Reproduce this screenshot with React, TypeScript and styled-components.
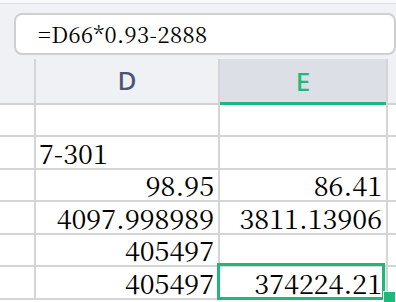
import styled, { createGlobalStyle } from 'styled-components'

const GlobalStyle = createGlobalStyle`
  html, body {
    margin: 0;
    padding: 0;
    background: #ffffff;
    overflow: hidden;
  }
`

const green = '#1fb87b'
const gridLine = '#d5d5d7'
const serifStack = `"Noto Serif CJK SC", "Liberation Serif", serif`

interface Row {
  d: string;
  e: string;
  dAlign?: 'left' | 'right';
  height: number;
  selected?: boolean;
}

const rows: Row[] = [
  { d: '', e: '', height: 32 },
  { d: '7-301', e: '', dAlign: 'left', height: 33 },
  { d: '98.95', e: '86.41', height: 32 },
  { d: '4097.998989', e: '3811.13906', height: 33 },
  { d: '405497', e: '', height: 32 },
  { d: '405497', e: '374224.21', height: 33, selected: true },
]

export const App = () => {
  return (
    <Page>
      <GlobalStyle />
      <Toolbar>
        <FormulaBox>=D66*0.93-2888</FormulaBox>
      </Toolbar>
      <Sheet>
        <HeaderRow>
          <HeadCell $width={36} $edge />
          <HeadCell $width={184} $edge>D</HeadCell>
          <HeadCell $width={168} $edge $active>E</HeadCell>
          <HeadCell />
        </HeaderRow>
        {rows.map((row, i) => (
          <DataRow key={i} $height={row.height}>
            <Cell $width={36} />
            <Cell $width={184} $align={row.dAlign || 'right'}>{row.d}</Cell>
            <Cell $width={168} $align="right">
              {row.e}
              {row.selected && (
                <>
                  <Selection />
                  <FillHandle />
                </>
              )}
            </Cell>
            <Cell $last />
          </DataRow>
        ))}
      </Sheet>
    </Page>
  )
}

const Page = styled.div`
  width: 396px;
  height: 302px;
  overflow: hidden;
  display: flex;
  flex-direction: column;
  background: #ffffff;
`

const Toolbar = styled.div`
  height: 56px;
  flex-shrink: 0;
  box-sizing: border-box;
  background: #f0f1f5;
  border-top: 3px solid #f8f8fa;
  box-shadow: inset 0 1px 0 #dfdfe3;
  padding: 10px 0 0 14px;
  display: flex;
`

const FormulaBox = styled.div`
  box-sizing: border-box;
  width: 420px;
  height: 42px;
  background: #ffffff;
  border: 2px solid #cfcfd3;
  border-radius: 8px;
  padding-left: 22px;
  display: flex;
  align-items: center;
  font-family: ${serifStack};
  font-size: 22px;
  line-height: 1;
  letter-spacing: 0.4px;
  color: #000000;
`

const Sheet = styled.div`
  display: flex;
  flex-direction: column;
`

const HeaderRow = styled.div`
  display: flex;
  height: 49px;
  box-sizing: border-box;
  background: #f0f1f5;
  border-bottom: 2px solid #d2d2d6;
`

const HeadCell = styled.div<{ $width?: number; $edge?: boolean; $active?: boolean }>`
  position: relative;
  box-sizing: border-box;
  ${p => (p.$width ? `width: ${p.$width}px; flex-shrink: 0;` : 'flex: 1;')}
  margin-top: 3px;
  border-right: ${p => (p.$edge ? `2px solid ${gridLine}` : 'none')};
  background: ${p => (p.$active ? '#dcdfe6' : 'transparent')};
  box-shadow: ${p => (p.$active ? `inset 0 -3px 0 ${green}` : 'none')};
  margin-bottom: ${p => (p.$active ? '-2px' : '0')};
  display: flex;
  align-items: center;
  justify-content: center;
  padding-bottom: 2px;
  font-family: "Noto Sans", "Liberation Sans", sans-serif;
  font-size: 26px;
  font-weight: 500;
  color: ${p => (p.$active ? green : '#4d5670')};
`

const DataRow = styled.div<{ $height: number }>`
  display: flex;
  height: ${p => p.$height}px;
  box-sizing: border-box;
  border-bottom: 2px solid ${gridLine};
`

const Cell = styled.div<{ $width?: number; $align?: 'left' | 'right'; $last?: boolean }>`
  position: relative;
  box-sizing: border-box;
  ${p => (p.$width ? `width: ${p.$width}px; flex-shrink: 0;` : 'flex: 1;')}
  border-right: ${p => (p.$last ? 'none' : `2px solid ${gridLine}`)};
  display: flex;
  align-items: center;
  justify-content: ${p => (p.$align === 'left' ? 'flex-start' : 'flex-end')};
  padding: ${p => (p.$align === 'left' ? '0 0 1px 3px' : '0 4px 1px 0')};
  font-family: ${serifStack};
  font-size: 27px;
  line-height: 1;
  color: #000000;
  white-space: nowrap;
`

const Selection = styled.div`
  position: absolute;
  top: -4px;
  left: -3px;
  right: 1px;
  bottom: -2px;
  border: 3px solid ${green};
  pointer-events: none;
`

const FillHandle = styled.div`
  position: absolute;
  left: 163px;
  top: 24px;
  width: 11px;
  height: 11px;
  background: ${green};
  border: 1px solid #ffffff;
`

export default App
